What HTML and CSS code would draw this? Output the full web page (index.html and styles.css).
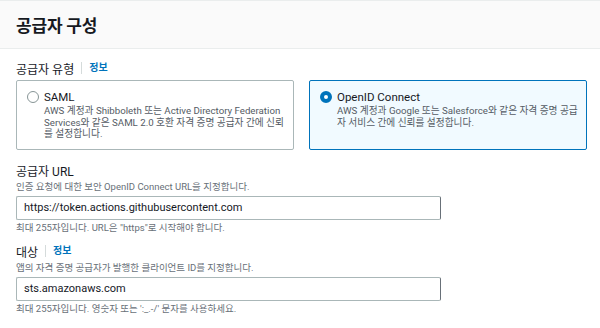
FILE: index.html
```html
<!DOCTYPE html>
<html lang="ko">
    <head>
        <meta charset="UTF-8" />
        <meta name="viewport" content="width=device-width, initial-scale=1.0" />
        <title>공급자 구성</title>
        <link rel="stylesheet" href="styles.css">
    </head>
    <body>
        <section class="panel">
            <!-- 패널 헤더 -->
            <header class="panel-head">
                <h2>공급자 구성</h2>
            </header>

            <div class="panel-body">
                <!-- 공급자 유형 -->
                <div class="field">
                    <div class="label">
                        <span>공급자 유형</span>
                        <a href="#" class="info">정보</a>
                    </div>
                    <div class="tiles">
                        <label class="tile">
                            <span class="radio"></span>
                            <span class="tile-text">
                                <strong>SAML</strong>
                                <small>AWS 계정과 Shibboleth 또는 Active Directory Federation Services와 같은 SAML 2.0 호환 자격 증명 공급자 간에 신뢰를 설정합니다.</small>
                            </span>
                        </label>
                        <label class="tile on">
                            <span class="radio"></span>
                            <span class="tile-text">
                                <strong>OpenID Connect</strong>
                                <small>AWS 계정과 Google 또는 Salesforce와 같은 자격 증명 공급자 서비스 간에 신뢰를 설정합니다.</small>
                            </span>
                        </label>
                    </div>
                </div>

                <!-- 공급자 URL -->
                <div class="field">
                    <div class="label"><span>공급자 URL</span></div>
                    <p class="desc">인증 요청에 대한 보안 OpenID Connect URL을 지정합니다.</p>
                    <div class="input">https://token.actions.githubusercontent.com</div>
                    <p class="hint">최대 255자입니다. URL은 "https"로 시작해야 합니다.</p>
                </div>

                <!-- 대상 -->
                <div class="field">
                    <div class="label">
                        <span>대상</span>
                        <a href="#" class="info">정보</a>
                    </div>
                    <p class="desc">앱의 자격 증명 공급자가 발행한 클라이언트 ID를 지정합니다.</p>
                    <div class="input">sts.amazonaws.com</div>
                    <p class="hint">최대 255자입니다. 영숫자 또는 ':_.-/' 문자를 사용하세요.</p>
                </div>
            </div>
        </section>
    </body>
</html>
```

FILE: styles.css
```css
html,
body {
    margin: 0;
    padding: 0;
}
body {
    background: #fff;
    color: #16191f;
    font-family: Roboto, "Noto Sans CJK KR", sans-serif;
}
p {
    margin: 0;
}

/* 패널 헤더 */
.panel-head {
    height: 47px;
    display: flex;
    align-items: center;
    padding: 0 16px;
    background: #fafafa;
    border-top: 1px solid #eaeded;
    border-bottom: 1px solid #eaeded;
}
.panel-head h2 {
    margin: 0;
    font-size: 17px;
    font-weight: bold;
    letter-spacing: -0.2px;
}

.panel-body {
    padding: 10px 13px 0 16px;
}

.field {
    margin-bottom: 7px;
}
.field:first-child {
    margin-bottom: 11px;
}

/* 라벨 + 정보 링크 */
.label {
    display: flex;
    align-items: center;
    height: 18px;
    font-size: 12px;
}
.info {
    margin-left: 7px;
    padding-left: 7px;
    border-left: 1px solid #d5dbdb;
    color: #0073bb;
    font-size: 10px;
    font-weight: bold;
    text-decoration: none;
    line-height: 12px;
}

/* 라디오 타일 */
.tiles {
    display: grid;
    grid-template-columns: 278px 278px;
    gap: 15px;
    margin-top: 3px;
}
.tile {
    display: flex;
    height: 70px;
    box-sizing: border-box;
    padding: 9px 6px 0 10px;
    border: 1px solid #aab7b8;
    border-radius: 2px;
}
.tile.on {
    background: #f1faff;
    border-color: #0073bb;
}
.radio {
    flex: none;
    width: 12px;
    height: 12px;
    margin: 1px 5px 0 0;
    box-sizing: border-box;
    border: 1px solid #879596;
    border-radius: 50%;
    background: #fff;
}
.tile.on .radio {
    border: 4px solid #0073bb;
}
.tile-text strong {
    display: block;
    font-size: 11.5px;
    font-weight: normal;
    line-height: 14px;
}
.tile-text small {
    display: block;
    margin-top: 1px;
    font-size: 9.7px;
    line-height: 11.5px;
    color: #545b64;
}

/* 설명 / 입력 / 힌트 */
.desc,
.hint {
    font-size: 9.5px;
    line-height: 14px;
    color: #687078;
}
.desc {
    margin-top: 1px;
}
.input {
    width: 425px;
    height: 24px;
    box-sizing: border-box;
    margin-top: 2px;
    padding: 0 7px;
    border: 1px solid #aab7b8;
    border-right-color: #687078;
    border-radius: 2px;
    font-size: 11px;
    line-height: 22px;
}
.hint {
    margin-top: 1px;
}
```
